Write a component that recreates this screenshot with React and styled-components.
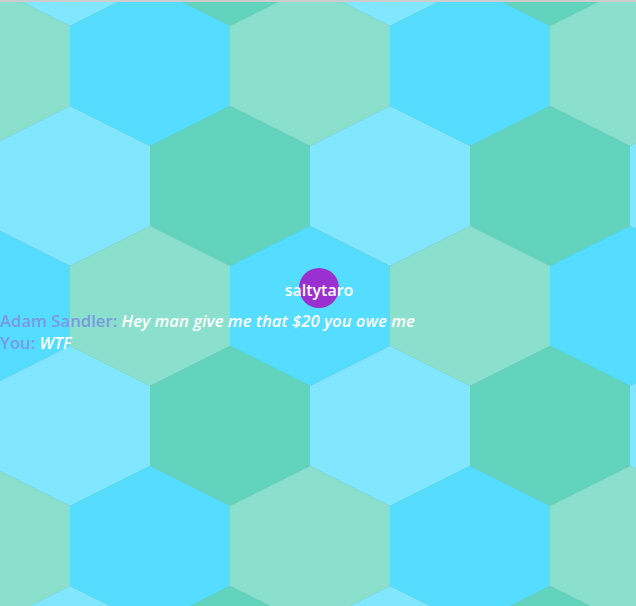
import React from 'react'
import styled, { createGlobalStyle } from 'styled-components'

const HEX_W = 160
const ROW_H = 120

const colors = {
    mint: '#8adfcd',
    cyan: '#54ddff',
    light: '#80e7ff',
    teal: '#62d4bd',
}

const messages = [
    { id: 1, name: 'Adam Sandler', text: 'Hey man give me that $20 you owe me' },
    { id: 2, name: 'You', text: 'WTF' },
]

function hexPoints(cx, cy) {
    return [
        [cx, cy - 80],
        [cx + 80, cy - 40],
        [cx + 80, cy + 40],
        [cx, cy + 80],
        [cx - 80, cy + 40],
        [cx - 80, cy - 40],
    ].map((p) => p.join(',')).join(' ')
}

function buildHexes() {
    const hexes = []
    for (let r = -1; r <= 5; r++) {
        const cy = 64 + ROW_H * r
        const even = Math.abs(r) % 2 === 0
        const startX = even ? -10 : -90
        for (let k = 0; k < 6; k++) {
            const cx = startX + HEX_W * k
            let fill
            if (even) {
                fill = (k + r / 2) % 2 === 0 ? colors.mint : colors.cyan
            } else {
                fill = k % 2 === 0 ? colors.teal : colors.light
            }
            hexes.push({ key: `${r}-${k}`, cx, cy, fill })
        }
    }
    return hexes
}

function HexField() {
    const hexes = buildHexes()
    return (
        <Field viewBox="0 0 636 604" preserveAspectRatio="xMinYMin slice">
            {hexes.map((h) => (
                <polygon key={h.key} points={hexPoints(h.cx, h.cy)} fill={h.fill} />
            ))}
        </Field>
    )
}

function App() {
    return (
        <>
            <GlobalStyle />
            <Stage>
                <HexField />
                <Player>
                    <Cell />
                    <Nick>saltytaro</Nick>
                </Player>
                <ChatLog>
                    {messages.map((m) => (
                        <Line key={m.id}>
                            <Author>{m.name}:</Author> <Said>{m.text}</Said>
                        </Line>
                    ))}
                </ChatLog>
            </Stage>
        </>
    )
}

const GlobalStyle = createGlobalStyle`
    html, body {
        margin: 0;
        padding: 0;
        overflow: hidden;
    }
    body {
        font-family: "Open Sans", "Noto Sans", sans-serif;
    }
`

const Stage = styled.main`
    position: relative;
    width: 100vw;
    height: 100vh;
    box-sizing: border-box;
    border-top: 2px solid #cdcdcd;
    background: #6fa9a3;
    overflow: hidden;
`

const Field = styled.svg`
    position: absolute;
    inset: 0;
    width: 100%;
    height: 100%;
    display: block;
`

// player sits on the game canvas, so its spot is the content
const Player = styled.div`
    position: absolute;
    left: 269px;
    top: 266px;
    width: 100px;
    height: 40px;
    display: grid;
    place-items: center;
`

const Cell = styled.div`
    grid-area: 1 / 1;
    width: 40px;
    height: 40px;
    border-radius: 50%;
    background: #9b30d0;
`

const Nick = styled.span`
    grid-area: 1 / 1;
    margin-top: 3px;
    color: #fff;
    font-size: 16px;
    line-height: 22px;
    font-weight: 600;
    white-space: nowrap;
`

const ChatLog = styled.div`
    position: absolute;
    left: 0;
    top: 308px;
    display: flex;
    flex-direction: column;
    font-size: 16.7px;
    line-height: 22px;
    font-weight: 600;
`

const Line = styled.div`
    white-space: nowrap;
`

const Author = styled.span`
    color: #7b9ae2;
`

const Said = styled.span`
    color: #fff;
    font-style: italic;
`

export default App
